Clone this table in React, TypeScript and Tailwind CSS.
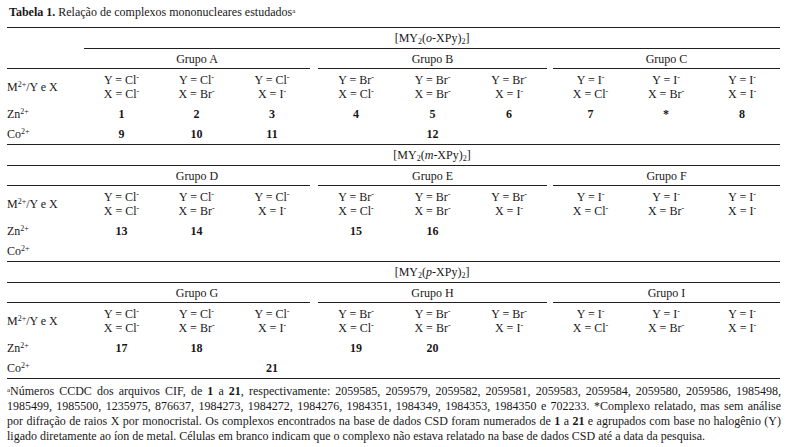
import React from 'react';

type SectionProps = {
  title: React.ReactNode;
  groups: [string, string, string];
  zn: string[];
  co: string[];
  first?: boolean;
};

const rule = 'border-b border-[#231f20]';

const Sup = ({ children }: { children: React.ReactNode }) => (
  <sup className="text-[8px] -top-[4px]">{children}</sup>
);

// Y / X pairs for the nine columns
const pairs: Array<[React.ReactNode, React.ReactNode]> = [
  ['Cl', 'Cl'], ['Cl', 'Br'], ['Cl', 'I'],
  ['Br', 'Cl'], ['Br', 'Br'], ['Br', 'I'],
  ['I', 'Cl'], ['I', 'Br'], ['I', 'I'],
];

const Ion = ({ s }: { s: React.ReactNode }) => (
  <>
    {s}
    <Sup>-</Sup>
  </>
);

function cells(values: React.ReactNode[], cls: string, spacerCls: string) {
  const out: React.ReactNode[] = [];
  values.forEach((v, i) => {
    if (i === 3 || i === 6) out.push(<td key={'s' + i} className={spacerCls} />);
    out.push(
      <td key={i} className={cls}>
        {v}
      </td>
    );
  });
  return out;
}

function Section({ title, groups, zn, co, first }: SectionProps) {
  const top = first ? 'border-t border-[#231f20] h-[22px]' : 'h-[21px]';
  return (
    <>
      <tr>
        <td className={`${top} ${first ? '' : rule}`} />
        <td colSpan={11} className={`${top} ${rule} text-center`}>
          {title}
        </td>
      </tr>
      <tr>
        <td className={`h-[20px] ${rule}`} />
        <td colSpan={3} className={`${rule} text-center`}>{groups[0]}</td>
        <td />
        <td colSpan={3} className={`${rule} text-center`}>{groups[1]}</td>
        <td />
        <td colSpan={3} className={`${rule} text-center`}>{groups[2]}</td>
      </tr>
      <tr>
        <td className="h-[35px] align-middle whitespace-nowrap">
          M<Sup>2+</Sup>/Y e X
        </td>
        {cells(
          pairs.map(([y, x], i) => (
            <div key={i} className="leading-[14px]">
              <div>Y = <Ion s={y} /></div>
              <div>X = <Ion s={x} /></div>
            </div>
          )),
          'text-center align-middle',
          ''
        )}
      </tr>
      <tr>
        <td className="h-[20px]">
          Zn<Sup>2+</Sup>
        </td>
        {cells(zn, 'text-center font-bold', '')}
      </tr>
      <tr>
        <td className={`h-[21px] ${rule}`}>
          Co<Sup>2+</Sup>
        </td>
        {cells(co, `text-center font-bold ${rule}`, rule)}
      </tr>
    </>
  );
}

const empty = ['', '', '', '', '', '', '', '', ''];

const Ligand = ({ pos }: { pos: string }) => (
  <>
    [MY<sub className="text-[8px]">2</sub>(<i>{pos}</i>-XPy)<sub className="text-[8px]">2</sub>]
  </>
);

const footLines: React.ReactNode[] = [
  <>
    <sup className="text-[7px]">a</sup>Números CCDC dos arquivos CIF, de <b>1</b> a <b>21</b>, respectivamente: 2059585, 2059579, 2059582, 2059581, 2059583, 2059584, 2059580, 2059586, 1985498,
  </>,
  <>1985499, 1985500, 1235975, 876637, 1984273, 1984272, 1984276, 1984351, 1984349, 1984353, 1984350 e 702233. *Complexo relatado, mas sem análise</>,
  <>
    por difração de raios X por monocristal. Os complexos encontrados na base de dados CSD foram numerados de <b>1</b> a <b>21</b> e agrupados com base no halogênio (Y)
  </>,
  <>ligado diretamente ao íon de metal. Células em branco indicam que o complexo não estava relatado na base de dados CSD até a data da pesquisa.</>,
];

export default function App() {
  return (
    <div className="w-[788px] h-[447px] bg-white text-[#1a1718] font-['Liberation_Serif','Times_New_Roman',serif] text-[12px] overflow-hidden">
      <div className="pl-[9px] pt-[5px] leading-[15px]">
        <b>Tabela 1.</b> Relação de complexos mononucleares estudados<sup className="text-[7px]">a</sup>
      </div>

      <table className="ml-[7px] mt-[7px] w-[773px] table-fixed border-separate border-spacing-0 leading-[14px]">
        <colgroup>
          <col className="w-[77px]" />
          <col className="w-[75px]" />
          <col className="w-[75px]" />
          <col className="w-[76px]" />
          <col className="w-[8px]" />
          <col className="w-[76px]" />
          <col className="w-[77px]" />
          <col className="w-[76px]" />
          <col className="w-[6px]" />
          <col className="w-[75px]" />
          <col className="w-[76px]" />
          <col className="w-[76px]" />
        </colgroup>
        <tbody>
          <Section
            first
            title={<Ligand pos="o" />}
            groups={['Grupo A', 'Grupo B', 'Grupo C']}
            zn={['1', '2', '3', '4', '5', '6', '7', '*', '8']}
            co={['9', '10', '11', '', '12', '', '', '', '']}
          />
          <Section
            title={<Ligand pos="m" />}
            groups={['Grupo D', 'Grupo E', 'Grupo F']}
            zn={['13', '14', '', '15', '16', '', '', '', '']}
            co={empty}
          />
          <Section
            title={<Ligand pos="p" />}
            groups={['Grupo G', 'Grupo H', 'Grupo I']}
            zn={['17', '18', '', '19', '20', '', '', '', '']}
            co={['', '', '21', '', '', '', '', '', '']}
          />
        </tbody>
      </table>

      <div className="ml-[7px] mt-[5px] w-[774px] leading-[15px]">
        {footLines.map((line, i) => (
          <div
            key={i}
            className={i < footLines.length - 1 ? 'text-justify [text-align-last:justify]' : 'text-left'}
          >
            {line}
          </div>
        ))}
      </div>
    </div>
  );
}
